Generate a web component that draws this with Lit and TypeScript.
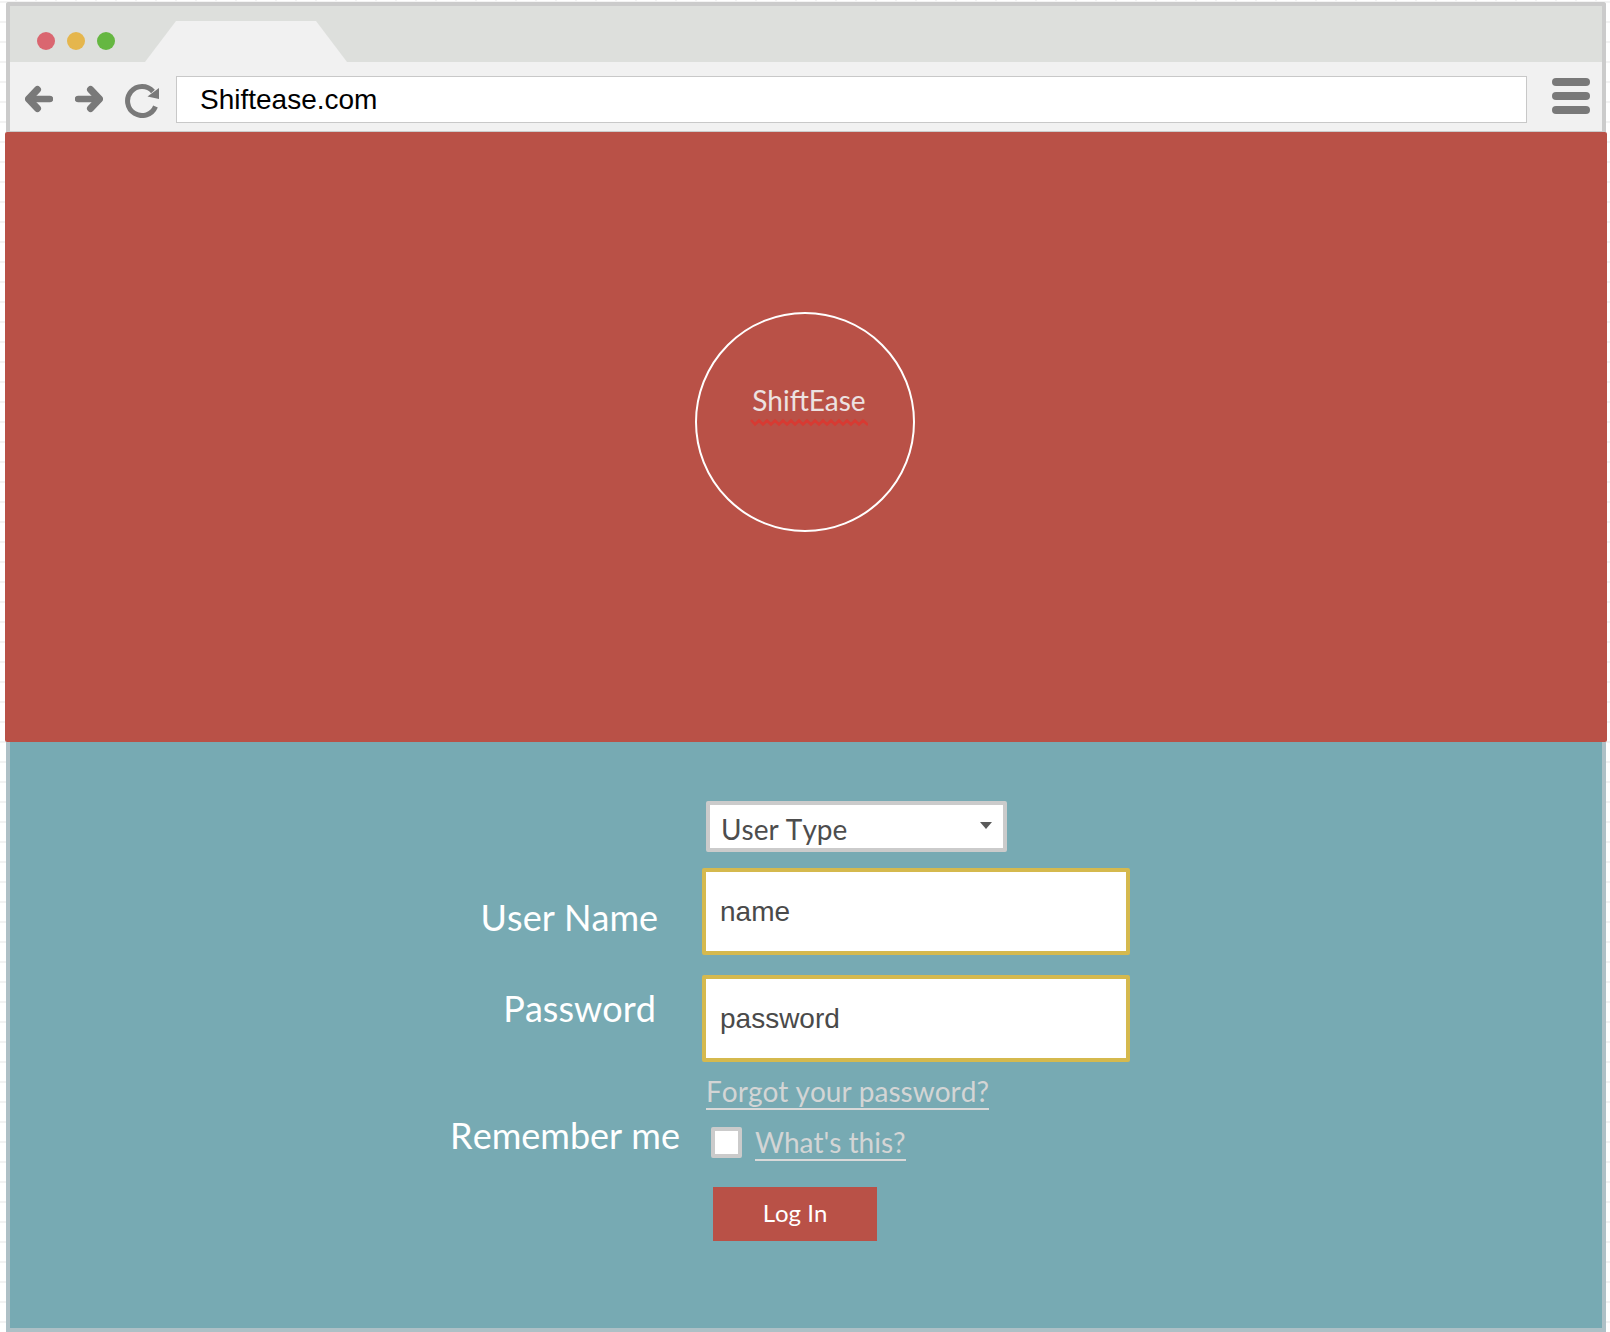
import { LitElement, html, css } from "lit";
import { customElement, state } from "lit/decorators.js";

@customElement("browser-chrome")
class BrowserChrome extends LitElement {
  static styles = css`
    :host {
      display: block;
      border: 4px solid #cbcbcb;
      border-bottom: 0;
      border-radius: 3px 3px 0 0;
      background: #f1f1f1;
    }
    .strip {
      display: flex;
      align-items: flex-end;
      height: 56px;
      background: #dddfdc;
    }
    .lights {
      display: flex;
      gap: 12px;
      padding: 0 30px 12px 27px;
    }
    .light {
      width: 18px;
      height: 18px;
      border-radius: 50%;
    }
    .close { background: #da6670; }
    .minimise { background: #e5b64d; }
    .expand { background: #65b741; }
    .tab {
      width: 202px;
      height: 41px;
      background: #f1f1f1;
      clip-path: polygon(31px 0, 171px 0, 100% 100%, 0 100%);
    }
    .toolbar {
      display: flex;
      align-items: center;
      box-sizing: border-box;
      height: 70px;
      padding: 6px 12px 0 15px;
      border-bottom: 1px solid #cbcbcb;
    }
    button {
      display: block;
      padding: 0;
      border: 0;
      background: none;
      line-height: 0;
      cursor: pointer;
    }
    .nav {
      display: flex;
      align-items: center;
      gap: 22px;
      margin-bottom: 1px;
    }
    .reload { margin-top: 4px; }
    .menu { margin-bottom: 8px; }
    .address {
      flex: 1;
      min-width: 0;
      box-sizing: border-box;
      height: 47px;
      margin: 0 25px 0 17px;
      padding: 1px 23px 0;
      border: 1px solid #c8c8c8;
      border-radius: 0;
      background: #fff;
      color: #000;
      font: 28px "Liberation Sans", sans-serif;
      outline: 0;
    }
  `;

  render() {
    return html`
      <div class="strip">
        <div class="lights">
          <span class="light close"></span>
          <span class="light minimise"></span>
          <span class="light expand"></span>
        </div>
        <div class="tab"></div>
      </div>
      <div class="toolbar">
        <div class="nav">
          <button type="button" aria-label="Back">
            <svg width="28" height="28" viewBox="0 0 28 28" fill="none" stroke="#797979" stroke-linecap="round" stroke-linejoin="round">
              <path d="M5 14H25" stroke-width="6.500" />
              <path d="M12.500 4.500L3.500 14L12.500 23.500" stroke-width="7" />
            </svg>
          </button>
          <button type="button" aria-label="Forward">
            <svg width="28" height="28" viewBox="0 0 28 28" fill="none" stroke="#797979" stroke-linecap="round" stroke-linejoin="round">
              <path d="M3 14H23" stroke-width="6.500" />
              <path d="M15.500 4.500L24.500 14L15.500 23.500" stroke-width="7" />
            </svg>
          </button>
          <button class="reload" type="button" aria-label="Reload">
            <svg width="34" height="34" viewBox="0 0 34 34">
              <path d="M30.500 22.500A14.500 14.500 0 1 1 28 7.500" fill="none" stroke="#797979" stroke-width="5" />
              <path d="M34 4V15L22.500 12.500Z" fill="#797979" />
            </svg>
          </button>
        </div>
        <input class="address" type="text" aria-label="Address" value="Shiftease.com" spellcheck="false" />
        <button class="menu" type="button" aria-label="Menu">
          <svg width="38" height="36" viewBox="0 0 38 36" fill="#797979">
            <rect width="38" height="8" rx="4" />
            <rect y="14" width="38" height="8" rx="4" />
            <rect y="28" width="38" height="8" rx="4" />
          </svg>
        </button>
      </div>
    `;
  }
}

@customElement("brand-hero")
class BrandHero extends LitElement {
  static styles = css`
    :host {
      display: flex;
      justify-content: center;
      margin: 0 -1px;
      padding: 180px 2px 210px 0;
      border-radius: 2px;
      background: #b95147;
    }
    .badge {
      display: flex;
      flex-direction: column;
      align-items: center;
      box-sizing: border-box;
      width: 220px;
      height: 220px;
      padding: 69px 0 0 8px;
      border: 2px solid #fff;
      border-radius: 50%;
    }
    .name {
      margin: 0;
      color: #ece2e1;
      font: 28px/34px Lato, sans-serif;
    }
    svg {
      display: block;
      margin-top: 1px;
    }
  `;

  render() {
    return html`
      <div class="badge">
        <h1 class="name">ShiftEase</h1>
        <svg width="118" height="9" viewBox="0 0 118 9" fill="none" stroke="#d83a32" stroke-width="2.500" aria-hidden="true">
          <path d="M1 2L5 6.500L9 2.500L13 6.500L17 2.500L21 6.500L25 2.500L29 6.500L33 2.500L37 6.500L41 2.500L45 6.500L49 2.500L53 6.500L57 2.500L61 6.500L65 2.500L69 6.500L73 2.500L77 6.500L81 2.500L85 6.500L89 2.500L93 6.500L97 2.500L101 6.500L105 2.500L109 6.500L113 2.500L118 7" />
        </svg>
      </div>
    `;
  }
}

@customElement("login-form")
class LoginForm extends LitElement {
  @state() private remember = false;

  static styles = css`
    :host {
      display: flex;
      justify-content: center;
      flex: 1;
      padding: 59px 30px 80px 0;
      border: 4px solid #adc0c6;
      border-top: 0;
      background: #77aab3;
      font-family: Lato, sans-serif;
      font-kerning: none;
    }
    form { width: 678px; }
    .row {
      display: grid;
      grid-template-columns: 228px 1fr;
      column-gap: 22px;
      align-items: start;
    }
    .row > .field { grid-column: 2; }
    .row.type { margin-bottom: 16px; }
    .row.user { margin-bottom: 20px; }
    .row.pass { margin-bottom: 12px; }
    .row.forgot { margin-bottom: 3px; }
    .row.keep { margin-bottom: 26px; }
    .label {
      justify-self: end;
      color: #fff;
      font-size: 36px;
      line-height: 44px;
      white-space: nowrap;
    }
    .user .label { padding: 27px 22px 0 0; }
    .pass .label { padding: 11px 24px 0 0; }
    .picker {
      display: grid;
      align-items: center;
      width: 301px;
      margin-left: 4px;
    }
    .picker > * { grid-area: 1 / 1; }
    .picker svg {
      justify-self: end;
      margin: 0 15px 2px 0;
      pointer-events: none;
    }
    select {
      appearance: none;
      box-sizing: border-box;
      width: 100%;
      height: 51px;
      padding: 4px 30px 0 11px;
      border: 4px solid #cbcbcb;
      border-radius: 2px;
      background: #fff;
      color: #4d4d4d;
      font: 28px Lato, sans-serif;
      font-kerning: none;
    }
    .text {
      display: block;
      box-sizing: border-box;
      width: 100%;
      height: 87px;
      padding: 0 14px;
      border: 4px solid #d5b94e;
      border-radius: 2px;
      background: #fff;
      color: #4a4a4a;
      font: 28px "Liberation Sans", sans-serif;
      outline: 0;
    }
    a {
      display: inline-block;
      border-bottom: 2px solid #d9d9d9;
      color: #d3d5d5;
      font-size: 28px;
      line-height: 34px;
      text-decoration: none;
      white-space: nowrap;
    }
    .forgot a {
      justify-self: start;
      margin-left: 4px;
    }
    .options {
      display: flex;
      align-items: center;
      gap: 13px;
      padding: 12px 0 0 9px;
    }
    .tick {
      appearance: none;
      box-sizing: border-box;
      width: 31px;
      height: 31px;
      margin: 0 0 2px;
      border: 4px solid #cbcbcb;
      border-radius: 2px;
      background: #fff;
    }
    .tick:checked {
      background: #b95147;
    }
    .submit {
      justify-self: start;
      width: 164px;
      height: 54px;
      margin-left: 11px;
      padding: 0 0 3px;
      border: 0;
      background: #b95147;
      color: #fff;
      font: 24px Lato, sans-serif;
      font-kerning: none;
      cursor: pointer;
    }
  `;

  private toggle(event: Event) {
    this.remember = (event.target as HTMLInputElement).checked;
  }

  render() {
    return html`
      <form @submit=${(event: Event) => event.preventDefault()}>
        <div class="row type">
          <div class="field picker">
            <select aria-label="User Type">
              <option>User Type</option>
            </select>
            <svg width="12" height="7" viewBox="0 0 12 7" fill="#5a5a5a" aria-hidden="true">
              <path d="M0 0H12L6 7Z" />
            </svg>
          </div>
        </div>
        <div class="row user">
          <label class="label" for="user">User Name</label>
          <input class="text field" id="user" type="text" value="name" spellcheck="false" />
        </div>
        <div class="row pass">
          <label class="label" for="pass">Password</label>
          <input class="text field" id="pass" type="text" value="password" spellcheck="false" />
        </div>
        <div class="row forgot">
          <a class="field" href="#forgot">Forgot your password?</a>
        </div>
        <div class="row keep">
          <label class="label" for="keep">Remember me</label>
          <div class="field options">
            <input class="tick" id="keep" type="checkbox" .checked=${this.remember} @change=${this.toggle} />
            <a href="#about">What's this?</a>
          </div>
        </div>
        <div class="row">
          <button class="submit field" type="submit">Log In</button>
        </div>
      </form>
    `;
  }
}

@customElement("app-root")
class AppRoot extends LitElement {
  static styles = css`
    :host {
      display: flex;
      flex-direction: column;
      box-sizing: border-box;
      min-height: 100vh;
      padding: 2px 4px 0 6px;
      background-color: #fff;
      background-image:
        linear-gradient(#f3f3f3 2px, transparent 2px),
        linear-gradient(90deg, #f3f3f3 2px, transparent 2px);
      background-size: 20px 20px;
      background-position: 15px 1px;
    }
  `;

  render() {
    return html`
      <browser-chrome></browser-chrome>
      <brand-hero></brand-hero>
      <login-form></login-form>
    `;
  }
}
